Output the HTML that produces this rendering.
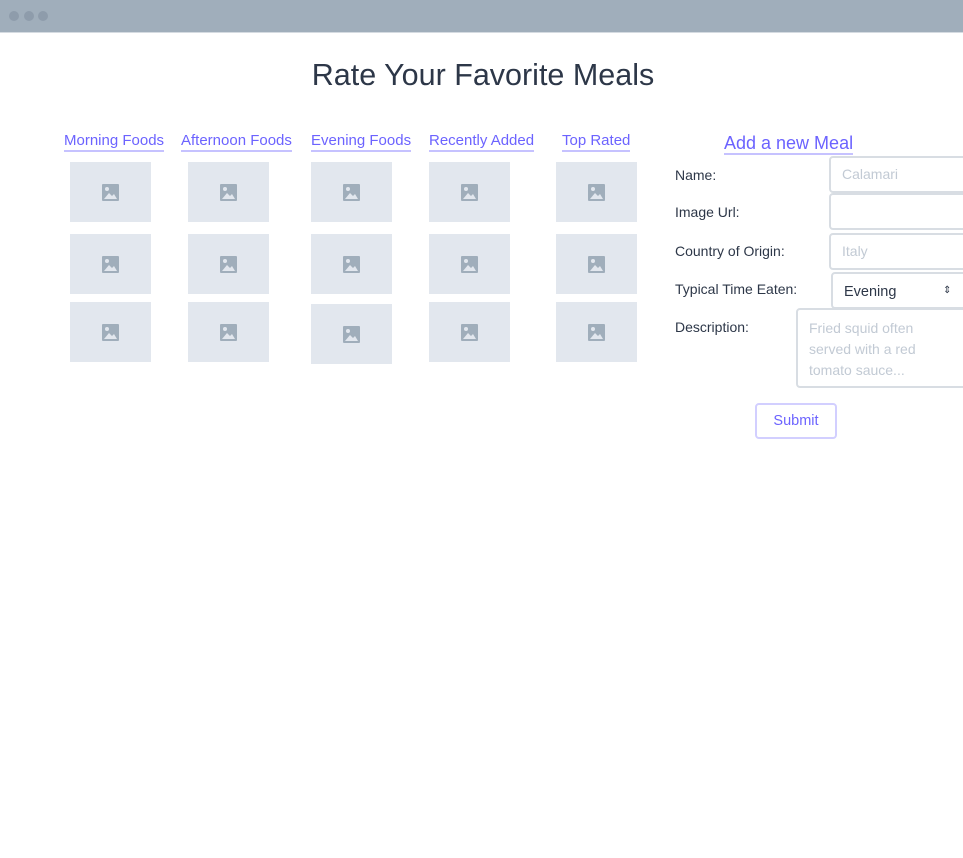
<!DOCTYPE html>
<html><head><style>
body{margin:0;width:963px;height:858px;background:#fff;font-family:"Liberation Sans",sans-serif;position:relative;overflow:hidden}
.bar{position:absolute;left:0;top:0;width:963px;height:32px;background:#a0aebb;border-bottom:1px solid #d5dbe1}
.dot{position:absolute;top:11px;width:10px;height:10px;border-radius:50%;background:#8e9cab}
h1{position:absolute;top:58px;left:0;width:966px;text-align:center;margin:0;font-weight:400;font-size:30.5px;color:#2d3748}
.lnk{position:absolute;top:132px;font-size:15px;color:#6c63ff;border-bottom:2px solid #c6c2ff;line-height:18px;white-space:nowrap}
.img{position:absolute;width:81px;height:60px;background:#e2e7ee}
.img svg{position:absolute;left:32px;top:22px}
.lab{position:absolute;left:675px;font-size:14px;color:#2d3748}
.in{position:absolute;border:2px solid #d8dde3;border-radius:4px;box-sizing:border-box;background:#fff;font-size:14px;color:#c2cad4;padding-left:11px}
</style></head><body>
<div class="bar"><div class="dot" style="left:9px"></div><div class="dot" style="left:24px"></div><div class="dot" style="left:38px"></div></div>
<h1>Rate Your Favorite Meals</h1>
<div class="lnk" style="left:64px">Morning Foods</div>
<div class="lnk" style="left:181px">Afternoon Foods</div>
<div class="lnk" style="left:311px">Evening Foods</div>
<div class="lnk" style="left:429px">Recently Added</div>
<div class="lnk" style="left:562px">Top Rated</div>
<div id="imgs"></div>
<script>
var cols=[70,188,311,429,556],rows=[[162,234,302],[162,234,302],[162,234,304],[162,234,302],[162,234,302]],h='';
for(var i=0;i<5;i++)for(var j=0;j<3;j++)h+='<div class="img" style="left:'+cols[i]+'px;top:'+rows[i][j]+'px"><svg width="17" height="17" viewBox="0 0 17 17"><rect width="17" height="17" rx="1" fill="#a0aebb"/><circle cx="5" cy="5" r="2" fill="#e2e7ee"/><path d="M2 15 L7 9 L10 12 L12 10 L15 15Z" fill="#e2e7ee"/></svg></div>';
document.getElementById('imgs').innerHTML=h;
</script>
<div class="lnk" style="left:724px;top:133px;font-size:18px;line-height:20px">Add a new Meal</div>
<div class="lab" style="top:167px">Name:</div>
<div class="lab" style="top:204px">Image Url:</div>
<div class="lab" style="top:243px">Country of Origin:</div>
<div class="lab" style="top:281px">Typical Time Eaten:</div>
<div class="lab" style="top:319px">Description:</div>
<div class="in" style="left:829px;top:156px;width:140px;height:37px;line-height:33px">Calamari</div>
<div class="in" style="left:829px;top:193px;width:140px;height:37px"></div>
<div class="in" style="left:829px;top:233px;width:140px;height:37px;line-height:33px">Italy</div>
<div class="in" style="left:831px;top:272px;width:140px;height:37px;line-height:36px;color:#2d3748;font-size:14.5px">Evening<span style="position:absolute;left:110px;font-size:10px;top:-1px">&#8661;</span></div>
<div class="in" style="left:796px;top:308px;width:175px;height:80px;line-height:21px;padding-top:8px">Fried squid often<br>served with a red<br>tomato sauce...</div>
<div style="position:absolute;left:755px;top:403px;width:82px;height:36px;border:2px solid #d2cfff;border-radius:4px;box-sizing:border-box;text-align:center;line-height:32px;font-size:14.5px;color:#6c63ff">Submit</div>
</body></html>
